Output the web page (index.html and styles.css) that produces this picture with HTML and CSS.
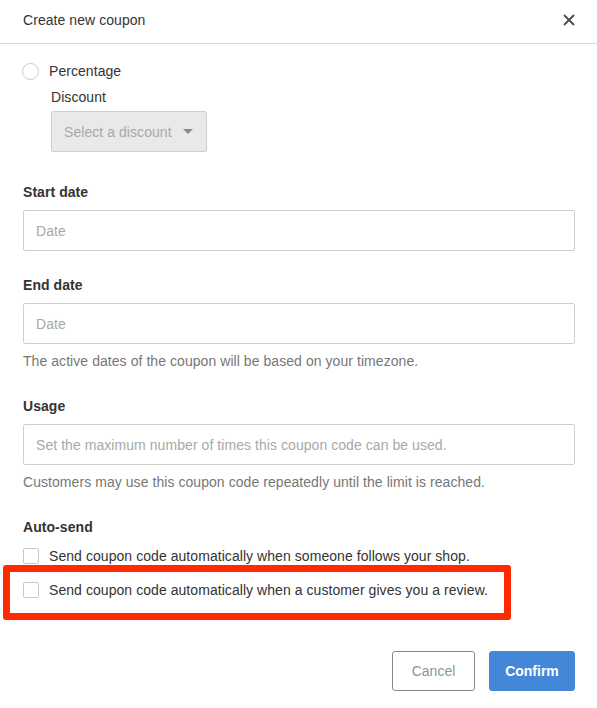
FILE: index.html
```html
<!DOCTYPE html>
<html>
<head>
<meta charset="utf-8">
<link rel="stylesheet" href="styles.css">
</head>
<body>
<div class="modal">
  <div class="header">
    <span class="title">Create new coupon</span>
    <svg class="close" width="12" height="12" viewBox="0 0 12 12"><path d="M1 1L11 11M11 1L1 11" stroke="#4a4a4a" stroke-width="1.8" fill="none"/></svg>
  </div>
  <div class="content">
    <div class="radio-row"><span class="radio"></span><span>Percentage</span></div>
    <div class="discount">
      <div class="sub-label">Discount</div>
      <div class="select"><span>Select a discount</span><span class="caret"></span></div>
    </div>

    <div class="label first">Start date</div>
    <div class="input">Date</div>

    <div class="label">End date</div>
    <div class="input">Date</div>
    <div class="help">The active dates of the coupon will be based on your timezone.</div>

    <div class="label">Usage</div>
    <div class="input">Set the maximum number of times this coupon code can be used.</div>
    <div class="help">Customers may use this coupon code repeatedly until the limit is reached.</div>

    <div class="label">Auto-send</div>
    <div class="check-row one"><span class="check"></span><span>Send coupon code automatically when someone follows your shop.</span></div>
    <div class="check-row two"><span class="check"></span><span>Send coupon code automatically when a customer gives you a review.</span></div>

    <div class="actions">
      <button class="btn cancel">Cancel</button>
      <button class="btn confirm">Confirm</button>
    </div>
  </div>
  <div class="highlight"></div>
</div>
</body>
</html>
```
FILE: styles.css
```css
* { box-sizing: border-box; }
html, body { margin: 0; padding: 0; background: #fff; }
body {
  font-family: "Liberation Sans", Arial, sans-serif;
  font-size: 14px;
  color: #333;
  line-height: 20px;
  letter-spacing: 0.06px;
}
.modal { position: relative; width: 597px; height: 708px; }
.header {
  height: 44px;
  border-bottom: 1px solid #d6d6d6;
  display: flex;
  align-items: flex-start;
  justify-content: space-between;
  padding: 10px 22px 0 23px;
}
.title { color: #333; }
.close { margin-top: 4px; }
.content { padding: 0 22px 0 23px; }
.radio-row {
  margin-top: 17px;
  display: flex;
  align-items: center;
  margin-left: -1px;
}
.radio {
  width: 17px; height: 17px;
  border: 1px solid #c8c8c8;
  border-radius: 50%;
  margin-right: 10px;
  background: #fff;
}
.discount { padding-left: 28px; }
.sub-label { margin-top: 6px; }
.select {
  margin-top: 4px;
  width: 156px;
  height: 41px;
  background: #e9e9e9;
  border: 1px solid #cfcfcf;
  border-radius: 2px;
  color: #a8a8a8;
  display: flex;
  align-items: center;
  padding-left: 12px;
}
.caret {
  width: 0; height: 0;
  border-left: 5px solid transparent;
  border-right: 5px solid transparent;
  border-top: 5px solid #8a8a8a;
  margin-left: 11px;
}
.label { font-weight: bold; margin-top: 24px; color: #333; }
.label.first { margin-top: 30px; }
.input {
  margin-top: 8px;
  height: 41px;
  border: 1px solid #cfcfcf;
  border-radius: 2px;
  color: #a8a8a8;
  display: flex;
  align-items: center;
  padding-left: 12px;
}
.help { margin-top: 7px; color: #777; }
.help + .label { margin-top: 25px; }
.check-row { display: flex; align-items: center; }
.check-row.one { margin-top: 9px; }
.check-row.two { margin-top: 14px; }
.check {
  width: 16px; height: 16px;
  border: 1px solid #c8c8c8;
  border-radius: 2px;
  margin-right: 10px;
  background: #fff;
}
.actions {
  margin-top: 51px;
  display: flex;
  justify-content: flex-end;
  gap: 14px;
}
.btn {
  height: 40px;
  font-family: "Liberation Sans", Arial, sans-serif;
  font-size: 14px;
  border-radius: 3px;
  cursor: pointer;
}
.cancel {
  width: 83px;
  background: #fff;
  border: 1px solid #7f8b90;
  color: #8a969b;
}
.confirm {
  width: 86px;
  background: #4487d9;
  border: 1px solid #4487d9;
  color: #fff;
  font-weight: bold;
}
.highlight {
  position: absolute;
  left: 3px; top: 565px;
  width: 508px; height: 55px;
  border: 7px solid #ff2a00;
  border-radius: 3px;
  pointer-events: none;
}
```
